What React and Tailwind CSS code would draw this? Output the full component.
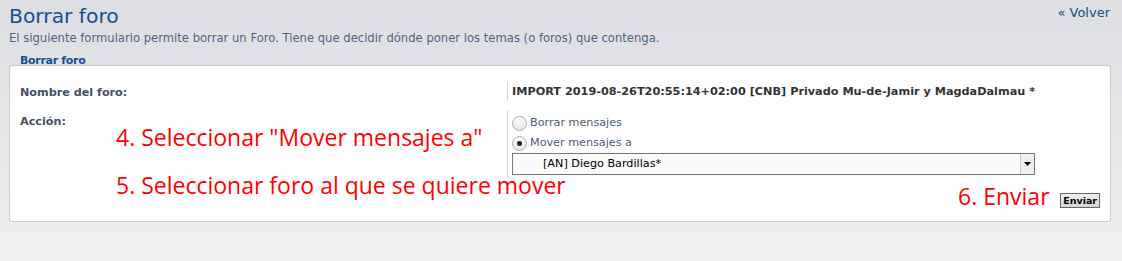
import React from "react";

const FONT = { fontFamily: '"DejaVu Sans", Verdana, sans-serif' };
const NOTE = { fontFamily: '"Open Sans", sans-serif' };

export default function App() {
    return (
        <div
            className="w-[1122px] h-[261px] bg-gradient-to-b from-[#dcdee2] via-[#e6e7e9] to-[#f0f0f0] px-[9px] pt-[3px] overflow-hidden"
            style={FONT}
        >
            {/* cabecera */}
            <div className="flex items-start justify-between">
                <h1 className="text-[20.3px] leading-[26px] text-[#115098] font-normal">Borrar foro</h1>
                <a className="text-[13px] leading-[20px] text-[#105289] mr-[3px]">« Volver</a>
            </div>
            <p className="text-[11.6px] leading-[14px] text-[#536482] mt-[2px]">
                El siguiente formulario permite borrar un Foro. Tiene que decidir dónde poner los temas (o foros) que contenga.
            </p>

            {/* fieldset */}
            <div className="mt-[10px] w-[1102px]">
                <div className="relative z-10 mb-[-2px] pl-[11px] text-[11px] leading-[12px] font-bold text-[#115098] tracking-[-0.3px]">Borrar foro</div>
                <div className="relative bg-white border border-[#cccccc] rounded-[3px] h-[157px] pt-[16px]">
                    <div className="flex items-center h-[19px]">
                        <div className="w-[497px] pl-[10px] text-[11.2px] leading-[14px] font-bold text-[#425067] pt-[3px]">Nombre del foro:</div>
                        <div className="border-l border-[#d8d8d8] h-[19px] pl-[4px] pt-[3px] text-[11.25px] leading-[14px] font-bold text-[#333333]">
                            IMPORT 2019-08-26T20:55:14+02:00 [CNB] Privado Mu-de-Jamir y MagdaDalmau *
                        </div>
                    </div>
                    <div className="flex mt-[9px]">
                        <div className="w-[497px] pl-[10px] text-[11.2px] leading-[14px] font-bold text-[#425067] pt-[5px]">Acción:</div>
                        <div className="border-l border-[#d8d8d8] h-[67px] pl-[4px] pt-[3px]">
                            <label className="flex items-center h-[20px] text-[11.2px] text-[#4c5d77]">
                                <span className="w-[15px] h-[15px] rounded-full border border-[#aaaaaa] bg-gradient-to-b from-white to-[#e6e6e6] mr-[3px]" />
                                Borrar mensajes
                            </label>
                            <label className="flex items-center h-[20px] text-[11.2px] text-[#4c5d77]">
                                <span className="w-[15px] h-[15px] rounded-full border border-[#aaaaaa] bg-gradient-to-b from-white to-[#e6e6e6] mr-[3px] flex items-center justify-center">
                                    <span className="w-[5px] h-[5px] rounded-full bg-[#222]" />
                                </span>
                                Mover mensajes a
                            </label>
                            <div className="w-[523px] h-[22px] border border-[#767676] bg-[#fafafa] flex items-center text-[11.2px] text-black">
                                <span className="flex-1 pl-[30px]">[AN] Diego Bardillas*</span>
                                <span className="w-[14px] h-[20px] bg-[#eeeeee] border-l border-[#c8c8c8] flex items-center justify-center">
                                    <svg width="7" height="4" viewBox="0 0 7 4">
                                        <path d="M0 0h7L3.5 4z" fill="#000" />
                                    </svg>
                                </span>
                            </div>
                        </div>
                    </div>
                    <div className="flex justify-end pr-[10px] mt-[16px]">
                        <button className="h-[15px] px-[2px] border border-[#666] bg-gradient-to-b from-[#efefef] to-[#d6d6d6] text-[9.5px] leading-[12px] font-bold text-black">
                            Enviar
                        </button>
                    </div>

                    {/* anotaciones */}
                    <div className="absolute left-[106px] top-[56px] text-[23px] leading-[30px] text-[#ff0000]" style={NOTE}>
                        4. Seleccionar "Mover mensajes a"
                    </div>
                    <div className="absolute left-[106px] top-[104px] text-[23px] leading-[30px] text-[#ff0000]" style={NOTE}>
                        5. Seleccionar foro al que se quiere mover
                    </div>
                    <div className="absolute left-[948px] top-[115px] text-[23px] leading-[30px] text-[#ff0000]" style={NOTE}>
                        6. Enviar
                    </div>
                </div>
            </div>
        </div>
    );
}
